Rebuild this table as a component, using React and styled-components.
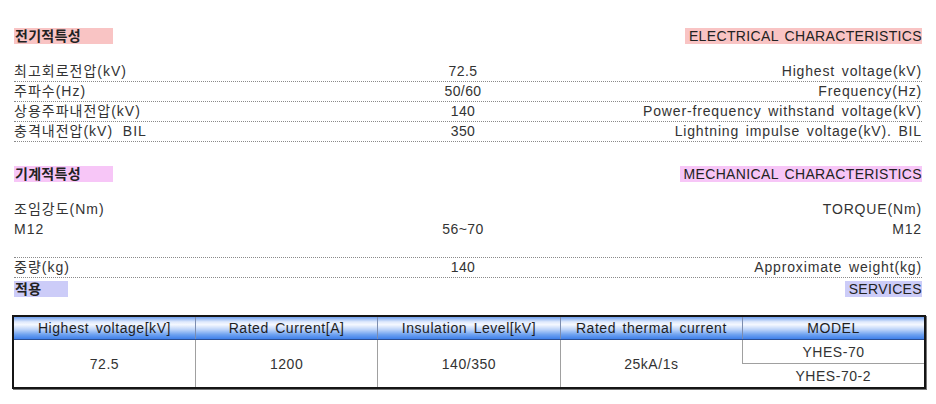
import React from "react";
import styled, { createGlobalStyle } from "styled-components";

const GlobalStyle = createGlobalStyle`
  html, body {
    margin: 0;
    padding: 0;
    background: #ffffff;
  }
  body {
    font-family: "Liberation Sans", "Noto Sans CJK KR", sans-serif;
    font-size: 14px;
    color: #333;
  }
`;

const electrical = [
  ["최고회로전압(kV)", "72.5", "Highest voltage(kV)"],
  ["주파수(Hz)", "50/60", "Frequency(Hz)"],
  ["상용주파내전압(kV)", "140", "Power-frequency withstand voltage(kV)"],
  ["충격내전압(kV)  BIL", "350", "Lightning impulse voltage(kV). BIL"],
];

const headers = [
  "Highest voltage[kV]",
  "Rated Current[A]",
  "Insulation Level[kV]",
  "Rated thermal current",
  "MODEL",
];

const Page = styled.div`
  width: 936px;
  height: 404px;
  padding: 28px 14px 0 14px;
  box-sizing: border-box;
  overflow: hidden;
`;

const SectionHead = styled.div`
  display: flex;
  justify-content: space-between;
  align-items: center;
  height: 16px;
  margin-top: ${p => p.$top || 0}px;
  line-height: 16px;
`;

const Mark = styled.span`
  display: inline-block;
  height: 16px;
  width: ${p => (p.$w ? `${p.$w}px` : "auto")};
  padding: ${p => (p.$right ? "0 0 0 4px" : "0 0 0 1px")};
  box-sizing: border-box;
  background: ${p => p.$bg};
  color: #222;
  font-weight: ${p => (p.$right ? 400 : 700)};
  letter-spacing: ${p => (p.$right ? "0.35px" : "0.3px")};
  word-spacing: ${p => (p.$right ? "2px" : "0")};
`;

const Rows = styled.div`
  margin-top: ${p => p.$top || 0}px;
`;

const Row = styled.div`
  display: grid;
  grid-template-columns: 389px 120px 1fr;
  align-items: center;
  height: 19px;
  line-height: 19px;
  border-bottom: 1px dotted ${p => (p.$lined ? "#8a8a8a" : "transparent")};
  border-top: ${p => (p.$topLine ? "1px dotted #8a8a8a" : "none")};
  margin-top: ${p => p.$top || 0}px;
  color: #333;
`;

const Ko = styled.span`
  letter-spacing: 1px;
  white-space: pre;
`;

const Val = styled.span`
  text-align: center;
  letter-spacing: 0.4px;
`;

const En = styled.span`
  text-align: right;
  letter-spacing: 0.85px;
  word-spacing: 2px;
  white-space: nowrap;
`;

const TableWrap = styled.div`
  margin: 18px -4px 0 -2px;
`;

const Table = styled.table`
  width: 914px;
  border-collapse: collapse;
  table-layout: fixed;
  border: 2px solid #151515;
  box-shadow: 1px 1px 0 #777;
`;

const Th = styled.th`
  height: 22px;
  padding: 0;
  font-weight: 400;
  color: #1e1e1e;
  letter-spacing: 0.55px;
  word-spacing: 2px;
  background: linear-gradient(
    to bottom,
    #6f9fee 0%,
    #dfe9fc 22%,
    #f4f8ff 35%,
    #b9d1f8 58%,
    #6ea2f0 80%,
    #3f80ea 100%
  );
  border-left: 1px solid #7c8db0;
  border-bottom: 1px solid #2a4f96;
  &:first-child {
    border-left: none;
  }
`;

const Td = styled.td`
  height: ${p => (p.$half ? "23px" : "auto")};
  padding: 0;
  text-align: center;
  color: #333;
  letter-spacing: 0.55px;
  border-left: 1px solid #a0a0a0;
  border-top: ${p => (p.$split ? "1px solid #a0a0a0" : "none")};
  &:first-child {
    border-left: none;
  }
`;

const Section = ({ ko, en, bg, w, top }) => (
  <SectionHead $top={top}>
    <Mark $bg={bg} $w={w}>
      {ko}
    </Mark>
    <Mark $bg={bg} $right>
      {en}
    </Mark>
  </SectionHead>
);

export default function App() {
  return (
    <>
      <GlobalStyle />
      <Page>
        <Section ko="전기적특성" en="ELECTRICAL CHARACTERISTICS" bg="#f9c4c4" w={99} />
        <Rows $top={18}>
          {electrical.map(([ko, v, en]) => (
            <Row key={ko} $lined>
              <Ko>{ko}</Ko>
              <Val>{v}</Val>
              <En>{en}</En>
            </Row>
          ))}
        </Rows>

        <Section ko="기계적특성" en="MECHANICAL CHARACTERISTICS" bg="#f7c6f7" w={99} top={24} />
        <Rows $top={18}>
          <Row>
            <Ko>조임강도(Nm)</Ko>
            <Val />
            <En>TORQUE(Nm)</En>
          </Row>
          <Row>
            <Ko>M12</Ko>
            <Val>56~70</Val>
            <En>M12</En>
          </Row>
          <Row $lined $topLine $top={17}>
            <Ko>중량(kg)</Ko>
            <Val>140</Val>
            <En>Approximate weight(kg)</En>
          </Row>
        </Rows>

        <Section ko="적용" en="SERVICES" bg="#ccccf8" w={54} top={3} />

        <TableWrap>
          <Table>
            <thead>
              <tr>
                {headers.map(h => (
                  <Th key={h}>{h}</Th>
                ))}
              </tr>
            </thead>
            <tbody>
              <tr>
                <Td rowSpan={2}>72.5</Td>
                <Td rowSpan={2}>1200</Td>
                <Td rowSpan={2}>140/350</Td>
                <Td rowSpan={2}>25kA/1s</Td>
                <Td $half>YHES-70</Td>
              </tr>
              <tr>
                <Td $half $split>
                  YHES-70-2
                </Td>
              </tr>
            </tbody>
          </Table>
        </TableWrap>
      </Page>
    </>
  );
}
